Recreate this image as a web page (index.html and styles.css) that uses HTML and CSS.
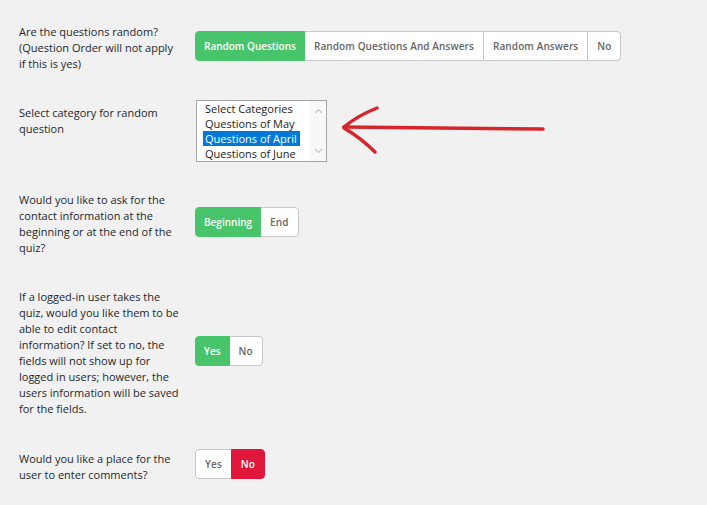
FILE: index.html
```html
<!DOCTYPE html>
<html lang="en">
<head>
<meta charset="utf-8">
<title>Quiz options</title>
<link rel="stylesheet" href="styles.css">
</head>
<body>
<div class="page">
  <div class="form">
    <div class="row">
      <div class="label">Are the questions random?<br>(Question Order will not apply<br>if this is yes)</div>
      <div class="group">
        <span class="seg on">Random Questions</span>
        <span class="seg">Random Questions And Answers</span>
        <span class="seg">Random Answers</span>
        <span class="seg">No</span>
      </div>
    </div>

    <div class="row row-select">
      <div class="label label-top">Select category for random<br>question</div>
      <div class="listbox">
        <ul class="options">
          <li>Select Categories</li>
          <li>Questions of May</li>
          <li class="selected">Questions of April</li>
          <li>Questions of June</li>
        </ul>
        <div class="scrollbar">
          <svg class="chev" width="9" height="6" viewBox="0 0 9 6"><polyline points="1,5 4.5,1.5 8,5"/></svg>
          <svg class="chev" width="9" height="6" viewBox="0 0 9 6"><polyline points="1,1 4.5,4.5 8,1"/></svg>
        </div>
      </div>
    </div>

    <div class="row">
      <div class="label">Would you like to ask for the<br>contact information at the<br>beginning or at the end of the<br>quiz?</div>
      <div class="group">
        <span class="seg on">Beginning</span>
        <span class="seg">End</span>
      </div>
    </div>

    <div class="row row-long">
      <div class="label">If a logged-in user takes the<br>quiz, would you like them to be<br>able to edit contact<br>information? If set to no, the<br>fields will not show up for<br>logged in users; however, the<br>users information will be saved<br>for the fields.</div>
      <div class="group">
        <span class="seg on">Yes</span>
        <span class="seg">No</span>
      </div>
    </div>

    <div class="row row-last">
      <div class="label">Would you like a place for the<br>user to enter comments?</div>
      <div class="group">
        <span class="seg">Yes</span>
        <span class="seg off">No</span>
      </div>
    </div>
  </div>

  <svg class="arrow" width="220" height="65" viewBox="0 0 220 65">
    <path d="M9 32 Q 110 33 208 34"/>
    <path d="M9 32 Q 22 21 42 13"/>
    <path d="M9 33 Q 26 43 40 57"/>
  </svg>
</div>
</body>
</html>
```

FILE: styles.css
```css
html, body {
  margin: 0;
  background: #f1f1f1;
}

body {
  font-family: "Open Sans", "Noto Sans", sans-serif;
  color: #23282d;
}

.page {
  position: relative;
  width: 707px;
  height: 505px;
  overflow: hidden;
}

.form {
  display: flex;
  flex-direction: column;
  gap: 30px;
  padding: 24px 0 0 19px;
}

.row {
  display: flex;
  align-items: center;
}

.row-select {
  margin-top: -2px;
}

.row-long {
  margin-top: 3px;
}

.row-last {
  margin-top: 2px;
}

.label {
  width: 176px;
  flex: none;
  font-size: 11px;
  line-height: 16px;
  white-space: nowrap;
}

.label-top {
  align-self: flex-start;
  margin-top: 5px;
}

.group {
  display: flex;
  height: 30px;
  margin-bottom: 5px;
}

.seg {
  box-sizing: border-box;
  height: 30px;
  display: flex;
  align-items: center;
  padding: 0 9px;
  margin-left: -1px;
  background: #fff;
  border: 1px solid #c8c8c8;
  color: #666;
  font-size: 10px;
  font-weight: 600;
  letter-spacing: 0.1px;
  white-space: nowrap;
}

.seg:first-child {
  margin-left: 0;
  border-radius: 4px 0 0 4px;
}

.seg:last-child {
  border-radius: 0 4px 4px 0;
}

.seg.on {
  position: relative;
  padding: 0 8px;
  letter-spacing: 0;
  background: #48c46b;
  border-color: #48c46b;
  color: #fff;
}

.seg.off {
  position: relative;
  padding: 0 9px;
  background: #e0173b;
  border-color: #e0173b;
  color: #fff;
}

.listbox {
  box-sizing: border-box;
  width: 131px;
  height: 62px;
  margin-left: 1px;
  display: flex;
  background: #fff;
  border: 1px solid #a5a5a5;
}

.options {
  flex: 1;
  list-style: none;
  margin: 0;
  padding: 0 0 0 6px;
  font-size: 11px;
  line-height: 15px;
  color: #222;
}

.options li {
  width: fit-content;
  padding: 0 2px;
  white-space: nowrap;
}

.options li.selected {
  padding-right: 3px;
  background: #0078d7;
  color: #fff;
}

.scrollbar {
  width: 16px;
  display: flex;
  flex-direction: column;
  justify-content: space-between;
  align-items: center;
  padding: 7px 0;
  background: #f8f8f8;
}

.chev polyline {
  fill: none;
  stroke: #c4c4c4;
  stroke-width: 1.2;
}

.arrow {
  position: absolute;
  left: 335px;
  top: 95px;
}

.arrow path {
  fill: none;
  stroke: #d7262b;
  stroke-width: 3.5;
  stroke-linecap: round;
}
```
